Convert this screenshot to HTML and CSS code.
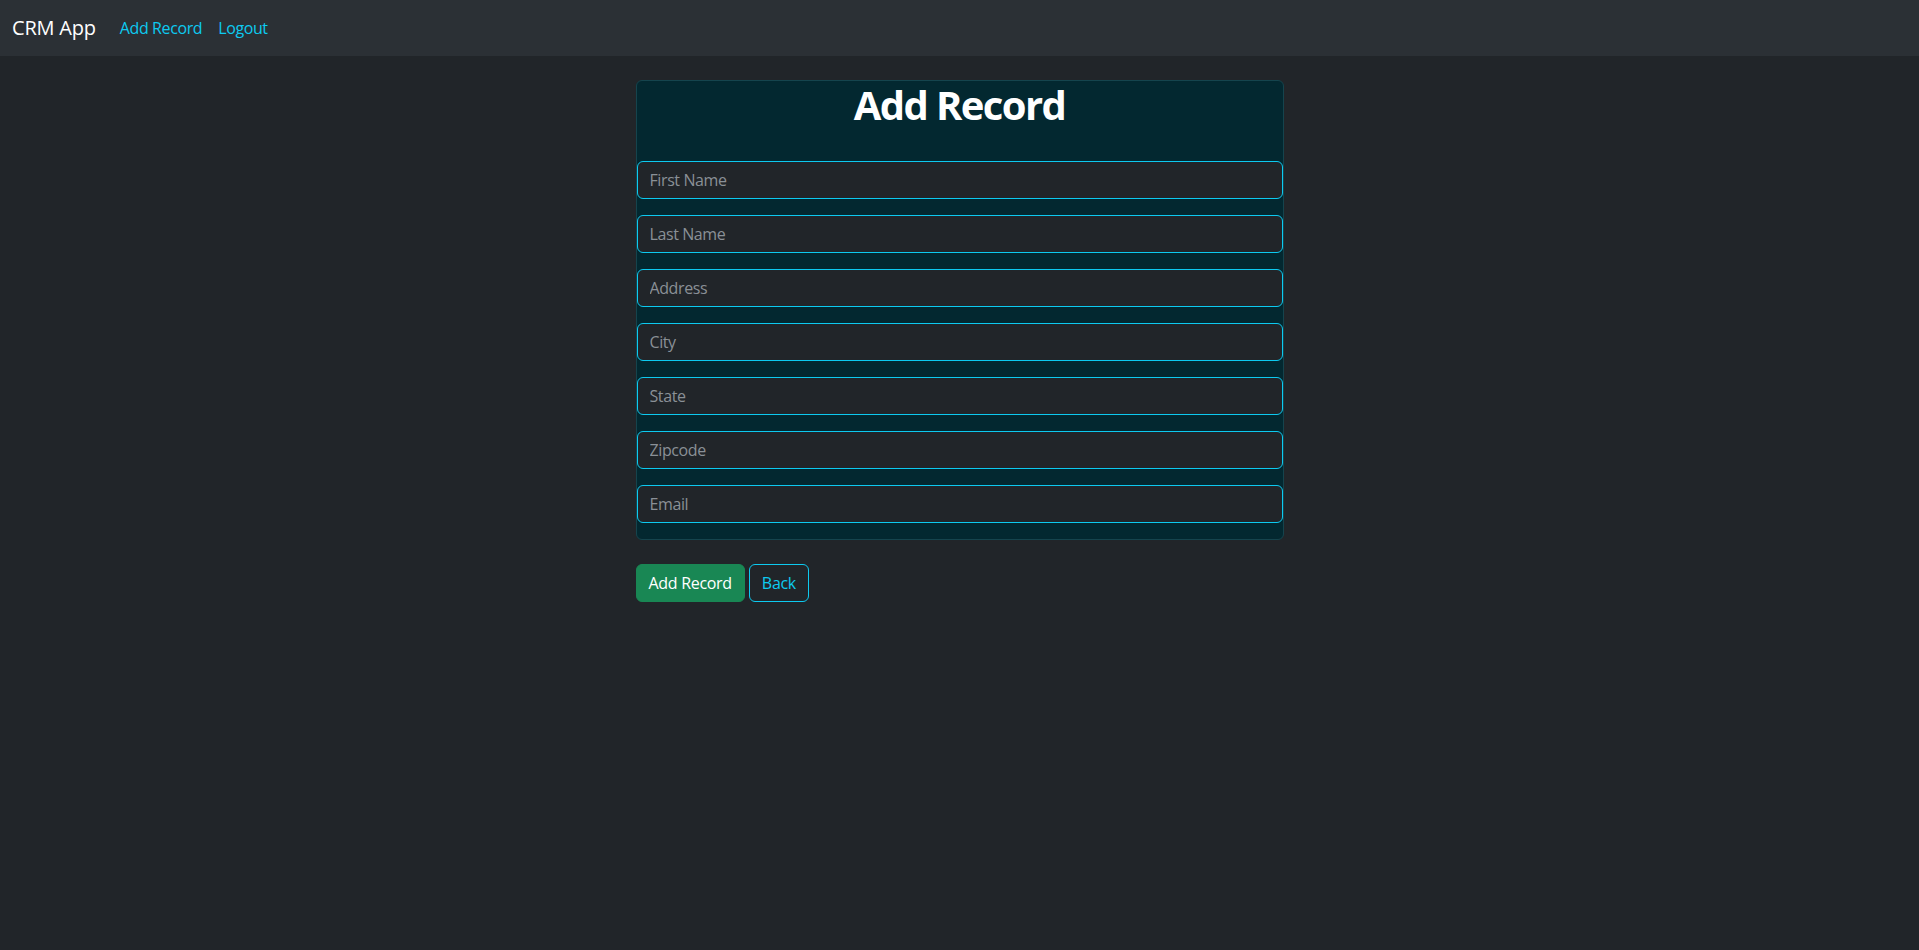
FILE: index.html
```html
<!DOCTYPE html>
<html lang="en">
<head>
<meta charset="utf-8">
<title>CRM App</title>
<link rel="stylesheet" href="styles.css">
</head>
<body>
<nav class="navbar">
  <a class="brand" href="#">CRM App</a>
  <ul class="nav-links">
    <li><a class="nav-link" href="#">Add Record</a></li>
    <li><a class="nav-link" href="#">Logout</a></li>
  </ul>
</nav>
<main class="container">
  <form class="record-form">
    <div class="card">
      <h1 class="card-title">Add Record</h1>
      <div class="spacer"></div>
      <input class="form-control" type="text" placeholder="First Name">
      <input class="form-control" type="text" placeholder="Last Name">
      <input class="form-control" type="text" placeholder="Address">
      <input class="form-control" type="text" placeholder="City">
      <input class="form-control" type="text" placeholder="State">
      <input class="form-control" type="text" placeholder="Zipcode">
      <input class="form-control" type="text" placeholder="Email">
    </div>
    <div class="actions">
      <button class="btn btn-success" type="button">Add Record</button>
      <a class="btn btn-outline-info" href="#">Back</a>
    </div>
  </form>
</main>
</body>
</html>
```

FILE: styles.css
```css
* { box-sizing: border-box; }

html, body {
  margin: 0;
  padding: 0;
}

body {
  background: #212529;
  color: #dee2e6;
  font-family: "Open Sans", "Noto Sans", sans-serif;
  font-size: 16px;
  line-height: 1.5;
  min-height: 950px;
}

.navbar {
  display: flex;
  align-items: center;
  height: 56px;
  padding: 8px 12px;
  background: #2b3035;
}

.brand {
  font-size: 20px;
  line-height: 30px;
  color: #fff;
  text-decoration: none;
  margin-right: 16px;
  letter-spacing: -0.2px;
}

.nav-links {
  display: flex;
  list-style: none;
  margin: 0;
  padding: 0;
}

.nav-link {
  display: block;
  padding: 8px;
  color: #0dcaf0;
  text-decoration: none;
  letter-spacing: -0.4px;
}

.container {
  width: 648px;
  margin: 24px auto 0;
}

.card {
  display: flex;
  flex-direction: column;
  background: #032830;
  border: 1px solid #15444d;
  border-radius: 6px;
}

.card-title {
  margin: 0 0 8px;
  font-size: 40px;
  line-height: 48px;
  font-weight: 700;
  color: #fff;
  text-align: center;
  letter-spacing: -1.6px;
}

.spacer { height: 24px; }

.form-control {
  display: block;
  width: 100%;
  height: 38px;
  margin: 0 0 16px;
  padding: 6px 12px;
  background: #212529;
  border: 1px solid #0dcaf0;
  border-radius: 6px;
  color: #dee2e6;
  font-family: inherit;
  font-size: 16px;
  letter-spacing: -0.4px;
  outline: none;
}

.form-control::placeholder {
  color: #8a9096;
}

.actions {
  display: flex;
  gap: 4px;
  margin-top: 24px;
}

.btn {
  display: inline-flex;
  align-items: center;
  height: 38px;
  padding: 6px 12px;
  border-radius: 6px;
  font-family: inherit;
  font-size: 16px;
  line-height: 24px;
  text-decoration: none;
  letter-spacing: -0.3px;
  cursor: pointer;
}

.btn-success {
  background: #198754;
  border: 1px solid #198754;
  color: #fff;
}

.btn-outline-info {
  background: transparent;
  border: 1px solid #0dcaf0;
  color: #0dcaf0;
}
```
